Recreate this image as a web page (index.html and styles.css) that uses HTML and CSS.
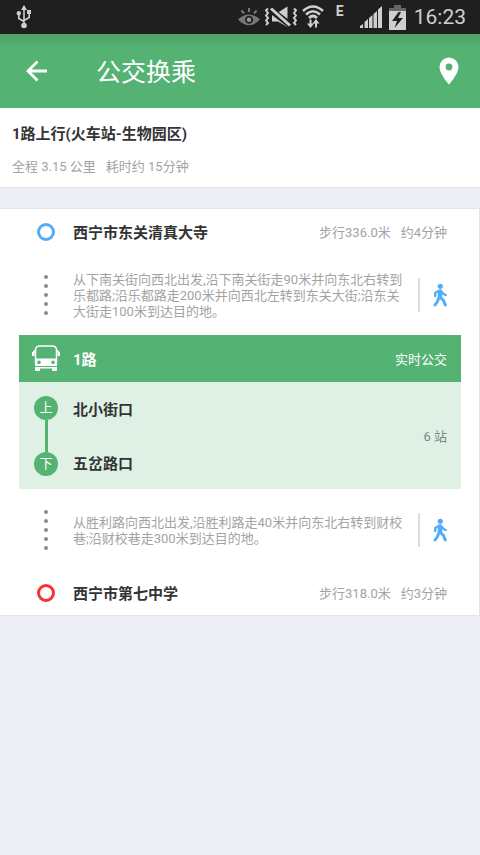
FILE: index.html
```html
<!DOCTYPE html>
<html lang="zh-CN">
<head>
<meta charset="utf-8">
<meta name="viewport" content="width=device-width, initial-scale=1">
<title>公交换乘</title>
<link rel="stylesheet" href="styles.css">
</head>
<body>
<div class="statusbar">
  <svg class="usb" width="16" height="24" viewBox="0 0 16 24" fill="none" stroke="#cfcfcf" stroke-width="1.600"><path d="M8 4v16M2.800 9v4.500L8 16.500M13.200 8v4.500L8 15.500"/><g fill="#cfcfcf" stroke="none"><path d="M8 0l3 5H5z"/><circle cx="2.800" cy="8.200" r="2.200"/><path d="M11 5h4v4h-4z"/><circle cx="8" cy="20.500" r="2.800"/></g></svg>
  <svg width="22" height="24" viewBox="0 0 22 24" fill="none" stroke="#777" stroke-width="2"><path fill="#777" fill-rule="evenodd" stroke="none" d="M0 14.500Q11 4.500 22 14.500Q11 26 0 14.500zM11 10.800a4 4 0 1 0 .1 0z"/><circle cx="11" cy="14.800" r="2.200" fill="#999" stroke="none"/><path d="M11 3v4M3.500 5.500l2.500 3M18.500 5.500l-2.500 3"/></svg>
  <svg class="mute" width="32" height="24" viewBox="0 0 32 24"><path fill="#cfcfcf" d="M7 7.500h6l9.500-6V22L13 16.500H7z"/><path d="M5 4.500L26 20.500" stroke="#1f1f1f" stroke-width="6.500"/><path d="M6 3.500l19 17" stroke="#cfcfcf" stroke-width="3"/><path d="M3 3.500l-2 2 2 2.500-2 2.500 2 2.500-2 2.500 2 2.500-2 2M29 3.500l2 2-2 2.500 2 2.500-2 2.500 2 2.500-2 2.500 2 2" fill="none" stroke="#cfcfcf" stroke-width="2"/></svg>
  <svg class="wifi" width="22" height="24" viewBox="0 0 22 24" fill="none" stroke="#cfcfcf" stroke-width="2.600"><path d="M1 6Q11-3 21 6M4 9.500Q11 3 18 9.500M7 13Q11 9 15 13"/><g stroke-width="2"><path d="M8.500 14.500v6M14 22.500v-6"/></g><g fill="#cfcfcf" stroke="none"><path d="M5 18.500h7l-3.500 4.500zM10.500 18.500h7L14 14z"/></g></svg>
  <span class="network">E</span>
  <svg class="signal" width="22" height="24" viewBox="0 0 22 24" fill="#cfcfcf"><path d="M0 23v-2l3-2v4zM4.500 17l3.500-3v9H4.500zM9 13l3.500-3v13H9zM13.500 9L17 6v17h-3.500zM18 4.500L22 1v22h-4z"/></svg>
  <svg class="battery" width="17" height="25" viewBox="0 0 17 25"><path fill="#666" d="M5 0h7v3h5v4H0V3h5z"/><path fill="#cfcfcf" d="M0 6h17v19H0z"/><path fill="#1f1f1f" d="M9.500 7L3 16h5l-2.500 7L14 13H9l3-6z"/></svg>
  <span class="clock">16:23</span>
</div>
<header class="appbar">
  <button class="icon-button" type="button" aria-label="返回"><svg width="22" height="22" viewBox="0 0 22 22" fill="none" stroke="#fff" stroke-width="2.800"><path d="M21 11H2.500M11.500 1.500L2 11l9.500 9.500"/></svg></button>
  <h1>公交换乘</h1>
  <button class="icon-button" type="button" aria-label="地图"><svg width="20" height="28" viewBox="0 0 20 28"><path fill="#fff" fill-rule="evenodd" d="M10 .500A9.500 9.500 0 0 0 .500 10C.500 17 10 27.500 10 27.500S19.500 17 19.500 10A9.500 9.500 0 0 0 10 .500zM10 6.600a3.400 3.400 0 1 1 0 6.800a3.400 3.400 0 0 1 0-6.800z"/></svg></button>
</header>
<main>
  <section class="summary">
    <h2>1路上行(火车站-生物园区)</h2>
    <p><span>全程 3.15 公里</span><span>耗时约 15分钟</span></p>
  </section>
  <section class="route">
    <div class="place">
      <span class="marker"><span class="ring"></span></span>
      <h3>西宁市东关清真大寺</h3>
      <p class="meta"><span>步行336.0米</span><span>约4分钟</span></p>
    </div>
    <div class="walk">
      <span class="dots"><i></i><i></i><i></i><i></i><i></i></span>
      <p>从下南关街向西北出发,沿下南关街走90米并向东北右转到乐都路;沿乐都路走200米并向西北左转到东关大街;沿东关大街走100米到达目的地。</p>
      <span class="walker"><svg width="14" height="24" viewBox="0 0 14 24" fill="none" stroke="#55acf8" stroke-linecap="round" stroke-linejoin="round"><circle cx="7.300" cy="3.300" r="2.600" fill="#55acf8" stroke="none"/><path d="M7 8.500v5.500" stroke-width="4.500"/><path d="M5.500 8L2.200 10v3M8.500 8.500l2 2.500 2.200 1" stroke-width="2.400"/><path d="M5.500 15.500l-1 3-2.500 3.500M7.500 14.500l3 3 1.800 4.500" stroke-width="3"/></svg></span>
    </div>
    <div class="bus">
      <div class="bus-head">
        <span class="marker"><svg width="28" height="27" viewBox="0 0 28 27"><path fill="none" stroke="#fff" stroke-width="1.500" d="M3.500 5.500Q1 6 1 10M24.500 5.500Q27 6 27 10M3.500 18V5Q3.500 1 8 1h12q4.500 0 4.500 4v13"/><path fill="#fff" fill-rule="evenodd" d="M3 13.500h22V21H3zM7 15.500a1.800 1.800 0 1 0 .1 0zM21 15.500a1.800 1.800 0 1 0 .1 0zM3 22h22v1.500H3z"/><path fill="#fff" d="M0 7h2.500v4H0zM25.500 7H28v4h-2.500zM3 23h5v2q0 1-1 1H4q-1 0-1-1zM20 23h5v2q0 1-1 1h-3q-1 0-1-1z"/></svg></span>
        <h3>1路</h3>
        <a href="#live">实时公交</a>
      </div>
      <div class="bus-body" id="live">
        <div class="track"><span class="badge">上</span><span class="rail"></span><span class="badge">下</span></div>
        <div class="stops"><h3>北小街口</h3><h3>五岔路口</h3></div>
        <span class="count">6 站</span>
      </div>
    </div>
    <div class="walk">
      <span class="dots"><i></i><i></i><i></i><i></i><i></i></span>
      <p>从胜利路向西北出发,沿胜利路走40米并向东北右转到财校巷;沿财校巷走300米到达目的地。</p>
      <span class="walker"><svg width="14" height="24" viewBox="0 0 14 24" fill="none" stroke="#55acf8" stroke-linecap="round" stroke-linejoin="round"><circle cx="7.300" cy="3.300" r="2.600" fill="#55acf8" stroke="none"/><path d="M7 8.500v5.500" stroke-width="4.500"/><path d="M5.500 8L2.200 10v3M8.500 8.500l2 2.500 2.200 1" stroke-width="2.400"/><path d="M5.500 15.500l-1 3-2.500 3.500M7.500 14.500l3 3 1.800 4.500" stroke-width="3"/></svg></span>
    </div>
    <div class="place">
      <span class="marker"><span class="ring end"></span></span>
      <h3>西宁市第七中学</h3>
      <p class="meta"><span>步行318.0米</span><span>约3分钟</span></p>
    </div>
  </section>
</main>
</body>
</html>
```
FILE: styles.css
```css
* {
  box-sizing: border-box;
}

body {
  margin: 0;
  background: #eeeff4;
  color: #333;
  font-family: Roboto, "Noto Sans CJK SC", sans-serif;
  font-size: 13px;
  line-height: 16px;
}

h1, h2, h3, p {
  margin: 0;
}

h2, h3 {
  padding-top: 2px;
  font-size: 15px;
  line-height: 20px;
  font-weight: 700;
}

svg {
  display: block;
  flex: none;
}

.statusbar {
  display: flex;
  align-items: center;
  height: 34px;
  padding: 0 14px 0 16px;
  background: #1f1f1f;
  color: #cfcfcf;
}

.usb {
  margin-right: auto;
}

.mute {
  margin-left: 5px;
}

.wifi {
  margin-left: 5px;
}

.network {
  align-self: flex-start;
  margin: 3px 16px 0 12px;
  font-size: 14px;
  font-weight: 700;
}

.battery {
  margin: 0 8px 0 7px;
}

.clock {
  font-size: 21px;
  line-height: 24px;
}

.appbar {
  display: flex;
  align-items: center;
  height: 74px;
  padding: 0 21px 0 26px;
  background: linear-gradient(#4da067, #54b273 14px);
  color: #fff;
}

.appbar h1 {
  flex: 1;
  margin-left: 48px;
  padding-top: 3px;
  font-size: 25px;
  line-height: 32px;
  font-weight: 400;
}

.icon-button {
  padding: 0;
  border: 0;
  background: none;
}

.summary {
  padding: 14px 12px 12px;
  border-bottom: 1px solid #e3e4e8;
  background: #fff;
}

.summary p {
  display: flex;
  gap: 10px;
  margin-top: 15px;
  color: #a3a3a3;
}

.route {
  margin-top: 20px;
  border: 1px solid #e3e4e8;
  border-left: 0;
  background: #fff;
}

.place,
.walk {
  display: grid;
  grid-template-columns: 54px 1fr auto;
  align-items: center;
  padding: 0 32px 0 19px;
}

.place {
  min-height: 45px;
}

.walk {
  min-height: 81px;
  color: #a3a3a3;
}

.marker {
  display: flex;
  justify-content: center;
}

.ring {
  width: 18px;
  height: 18px;
  border: 3px solid #55acf8;
  border-radius: 50%;
}

.ring.end {
  border-color: #f8312f;
}

.meta {
  display: flex;
  gap: 10px;
  padding-top: 2px;
  color: #a3a3a3;
}

.dots {
  display: flex;
  flex-direction: column;
  align-items: center;
  gap: 5px;
}

.dots i {
  width: 4px;
  height: 4px;
  border-radius: 50%;
  background: #8c8c8c;
}

.walker {
  display: flex;
  align-items: center;
  height: 34px;
  margin-left: 12px;
  padding-left: 13px;
  border-left: 2px solid #ddd;
}

.walk p {
  padding-top: 2px;
  line-break: anywhere;
}

.bus {
  margin: 0 18px 0 19px;
  background: #dff1e5;
}

.bus-head {
  display: grid;
  grid-template-columns: 54px 1fr auto;
  align-items: center;
  height: 47px;
  padding-right: 14px;
  background: #54b273;
  color: #fff;
}

.bus-head a {
  padding-top: 2px;
  color: inherit;
  text-decoration: none;
}

.bus-body {
  display: grid;
  grid-template-columns: 54px 1fr auto;
  align-items: center;
  padding: 14px 14px 13px 0;
}

.track {
  display: flex;
  flex-direction: column;
  align-items: center;
}

.badge {
  width: 24px;
  height: 24px;
  border-radius: 50%;
  background: #54b273;
  color: #fff;
  line-height: 24px;
  text-align: center;
}

.rail {
  width: 3px;
  height: 32px;
  background: #54b273;
}

.stops {
  display: grid;
  gap: 32px;
}

.count {
  padding-top: 2px;
  color: #808782;
}
```
